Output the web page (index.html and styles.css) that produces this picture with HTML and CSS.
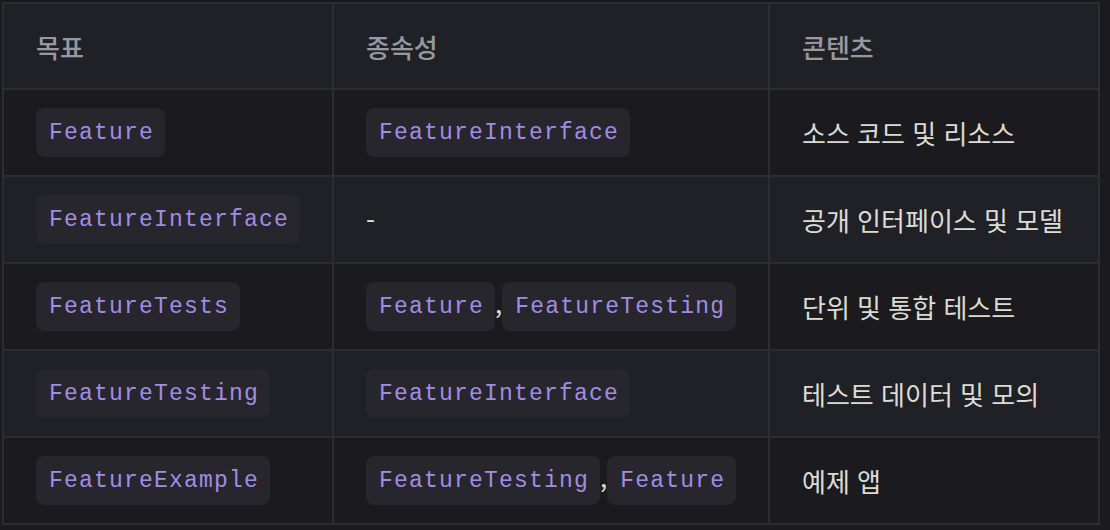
FILE: index.html
```html
<!DOCTYPE html>
<html lang="ko">
<head>
<meta charset="utf-8">
<title>모듈 구성</title>
<link rel="stylesheet" href="styles.css">
</head>
<body>
<div class="wrap">
<table class="modules">
  <colgroup>
    <col class="c1">
    <col class="c2">
    <col class="c3">
  </colgroup>
  <thead>
    <tr><th>목표</th><th>종속성</th><th>콘텐츠</th></tr>
  </thead>
  <tbody>
    <tr>
      <td><code>Feature</code></td>
      <td><code>FeatureInterface</code></td>
      <td>소스 코드 및 리소스</td>
    </tr>
    <tr>
      <td><code>FeatureInterface</code></td>
      <td>-</td>
      <td>공개 인터페이스 및 모델</td>
    </tr>
    <tr>
      <td><code>FeatureTests</code></td>
      <td><code>Feature</code>,<code>FeatureTesting</code></td>
      <td>단위 및 통합 테스트</td>
    </tr>
    <tr>
      <td><code>FeatureTesting</code></td>
      <td><code>FeatureInterface</code></td>
      <td>테스트 데이터 및 모의</td>
    </tr>
    <tr>
      <td><code>FeatureExample</code></td>
      <td><code>FeatureTesting</code>,<code>Feature</code></td>
      <td>예제 앱</td>
    </tr>
  </tbody>
</table>
</div>
</body>
</html>
```

FILE: styles.css
```css
html, body {
  margin: 0;
  padding: 0;
  background: #1b1b1f;
}

.wrap {
  padding: 2px 0 0 2px;
}

.modules {
  border-collapse: collapse;
  table-layout: fixed;
  width: 1098px;
  font-family: "Noto Sans CJK KR", "Noto Sans", sans-serif;
  font-size: 26px;
  color: rgba(255, 255, 245, 0.86);
}

.c1 { width: 330px; }
.c2 { width: 436px; }
.c3 { width: 330px; }

.modules th,
.modules td {
  border: 2px solid #2c2c31;
  padding: 0 32px;
  text-align: left;
  vertical-align: middle;
  white-space: nowrap;
}

.modules th {
  height: 84px;
  font-weight: 500;
  color: rgba(235, 235, 245, 0.6);
  background: #202127;
}

.modules td {
  height: 85px;
}

.modules tbody tr:nth-child(2n) {
  background: #202127;
}

.modules code {
  display: inline-block;
  font-family: "Liberation Mono", "DejaVu Sans Mono", monospace;
  font-size: 23px;
  letter-spacing: 1.2px;
  line-height: 48px;
  padding: 1px 11px 0 13px;
  border-radius: 8px;
  background: #26262c;
  color: #a28ce3;
  vertical-align: middle;
}
```
